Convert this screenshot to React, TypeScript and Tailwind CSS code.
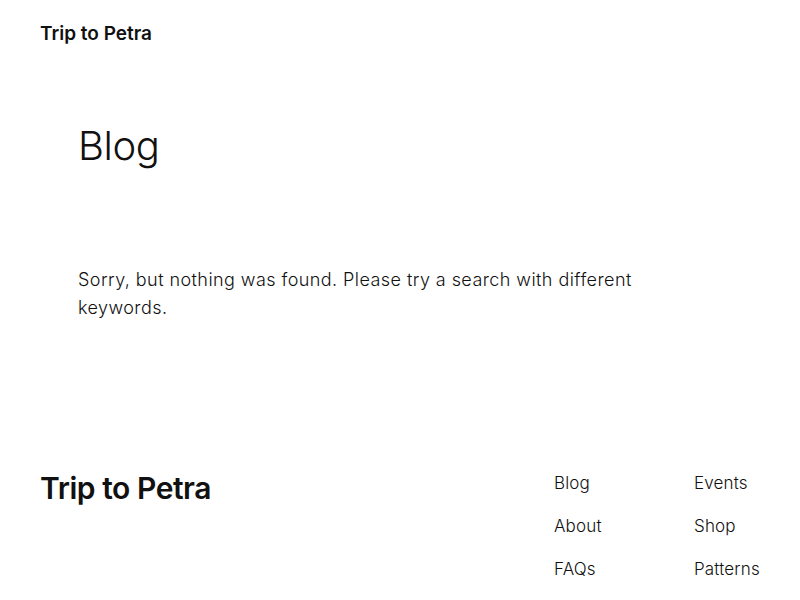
export default function App() {
  const font = { fontFamily: 'Inter, "Noto Sans", sans-serif' };
  return (
    <div className="w-[800px] h-[600px] bg-white text-[#111111] overflow-hidden" style={font}>
      <header className="px-10 pt-[22px] h-[96px]">
        <div className="text-[19px] font-semibold tracking-[0em] leading-[24px]">Trip to Petra</div>
      </header>
      <main className="px-[78px] pt-[26px]">
        <h1 className="text-[40px] font-light tracking-[-0.01em] leading-[48px]">Blog</h1>
        <p className="mt-[96px] w-[600px] text-[18px] font-light tracking-[0.024em] leading-[28px]">
          Sorry, but nothing was found. Please try a search with different keywords.
        </p>
      </main>
      <footer className="flex px-10 pt-[148px]">
        <div className="flex-1 text-[30px] font-semibold tracking-[-0.015em] leading-[36px]">Trip to Petra</div>
        <div className="grid grid-cols-[140px_66px] gap-y-[19px] text-[17px] font-light tracking-[0.01em] leading-[24px] pt-[1px]">
          <span>Blog</span>
          <span>Events</span>
          <span>About</span>
          <span>Shop</span>
          <span>FAQs</span>
          <span>Patterns</span>
        </div>
      </footer>
    </div>
  );
}
